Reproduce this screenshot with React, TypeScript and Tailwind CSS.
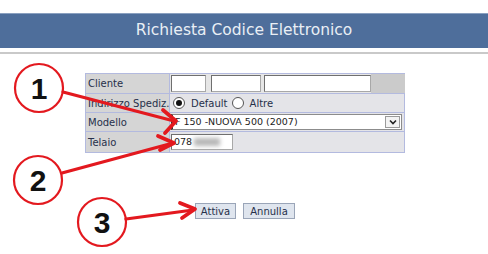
import React from "react";

const font = { fontFamily: '"DejaVu Sans", Verdana, sans-serif' };

function Radio({ checked }: { checked?: boolean }) {
  return (
    <span className="w-[12px] h-[12px] rounded-full border border-[#555] bg-white flex items-center justify-center">
      {checked && <span className="w-[6px] h-[6px] rounded-full bg-[#111]" />}
    </span>
  );
}

export default function App() {
  return (
    <div className="w-[488px] h-[254px] bg-white relative overflow-hidden" style={font}>
      <div className="pt-[13px]">
        <div className="h-[35px] bg-[#4e6e9b] border-t border-[#8aa0c0] flex items-center justify-center text-[15.5px] text-[#e9eef5]">
          Richiesta Codice Elettronico
        </div>
        <div className="mt-[4px] h-[2px] bg-[#c9c9c9]" />
      </div>

      <div className="ml-[85px] mt-[19px] w-[320px] border border-[#b3badf] text-[10px] text-[#26304a]">
        {/* Cliente */}
        <div className="flex h-[20px] border-b border-[#b3badf]">
          <div className="w-[84px] shrink-0 bg-[#d5d5d5] border-r border-[#b3badf] flex items-center pl-[2px]">Cliente</div>
          <div className="flex-1 bg-[#e6e6e6] flex items-center">
            <div className="ml-[1px] w-[35px] h-[17px] bg-white border border-[#a8a8a8] border-t-[#6f6f6f] border-l-[#6f6f6f]" />
            <div className="ml-[5px] w-[50px] h-[17px] bg-white border border-[#a8a8a8] border-t-[#6f6f6f] border-l-[#6f6f6f]" />
            <div className="ml-[3px] w-[107px] h-[17px] bg-white border border-[#a8a8a8] border-t-[#6f6f6f] border-l-[#6f6f6f]" />
            <div className="ml-auto w-[34px] h-full bg-[#cbcbcb]" />
          </div>
        </div>
        {/* Indirizzo */}
        <div className="flex h-[19px] border-b border-[#b3badf]">
          <div className="w-[84px] shrink-0 bg-[#d5d5d5] border-r border-[#b3badf] flex items-center pl-[2px] whitespace-nowrap overflow-hidden">Indirizzo Spediz.</div>
          <div className="flex-1 bg-[#e4e4e8] flex items-center pl-[3px] text-[10px]">
            <Radio checked />
            <span className="ml-[6px]">Default</span>
            <span className="ml-[4px]"><Radio /></span>
            <span className="ml-[6px]">Altre</span>
          </div>
        </div>
        {/* Modello */}
        <div className="flex h-[19px] border-b border-[#b3badf]">
          <div className="w-[84px] shrink-0 bg-[#d5d5d5] border-r border-[#b3badf] flex items-center pl-[2px]">Modello</div>
          <div className="flex-1 bg-[#e4e4e8] flex items-center pl-[1px] pr-[2px]">
            <div className="flex-1 h-[16px] bg-white border border-[#8c8c8c] border-l-[#333] border-l-2 flex items-center">
              <span className="pl-[2px] text-[9.5px] text-[#222]">F 150 -NUOVA 500 (2007)</span>
              <span className="ml-auto mr-[1px] w-[15px] h-[12px] border border-[#9a9a9a] bg-[#f3f3f3] flex items-center justify-center">
                <svg width="8" height="6" viewBox="0 0 8 6"><path d="M1 1.5 L4 4.5 L7 1.5" fill="none" stroke="#222" strokeWidth="1.6" /></svg>
              </span>
            </div>
          </div>
        </div>
        {/* Telaio */}
        <div className="flex h-[20px]">
          <div className="w-[84px] shrink-0 bg-[#d5d5d5] border-r border-[#b3badf] flex items-center pl-[2px]">Telaio</div>
          <div className="flex-1 bg-[#e4e4e8] flex items-center pl-[1px]">
            <div className="w-[62px] h-[16px] bg-white border border-[#a8a8a8] border-t-[#6f6f6f] border-l-[#6f6f6f] flex items-center pl-[2px] text-[9.5px] text-[#222]">
              078
              <span className="ml-[2px] w-[26px] h-[8px] bg-[#b8b8b8] blur-[2px]" />
            </div>
          </div>
        </div>
      </div>

      <div className="mt-[50px] ml-[195px] flex gap-[7px] text-[10px] text-[#26304a]">
        <div className="w-[41px] h-[16px] bg-[#dfe5ee] border border-[#9aa5b8] flex items-center justify-center">Attiva</div>
        <div className="w-[52px] h-[16px] bg-[#dfe5ee] border border-[#9aa5b8] flex items-center justify-center">Annulla</div>
      </div>

      <svg className="absolute inset-0 pointer-events-none" width="488" height="254" viewBox="0 0 488 254">
        <g fill="none" stroke="#e3191f" strokeLinecap="round" strokeLinejoin="round">
          <circle cx="39" cy="88" r="24" strokeWidth="2.2" />
          <circle cx="38" cy="180" r="24" strokeWidth="2.2" />
          <circle cx="102" cy="222" r="24" strokeWidth="2.2" />
          <path d="M63 92 L174 121" strokeWidth="3.2" />
          <path d="M163 110 L176 121 L165 133" strokeWidth="3.8" />
          <path d="M62 173 L173 143" strokeWidth="3.2" />
          <path d="M158 136 L174 143 L160 150" strokeWidth="3.8" />
          <path d="M126 219 L193 210" strokeWidth="3.2" />
          <path d="M180 203 L195 209 L182 218" strokeWidth="3.8" />
        </g>
        <g fontFamily="Liberation Sans, Arial, sans-serif" fontWeight="bold" fontSize="30" fill="#111" textAnchor="middle">
          <text x="39" y="99">1</text>
          <text x="38" y="191">2</text>
          <text x="102" y="233">3</text>
        </g>
      </svg>
    </div>
  );
}
